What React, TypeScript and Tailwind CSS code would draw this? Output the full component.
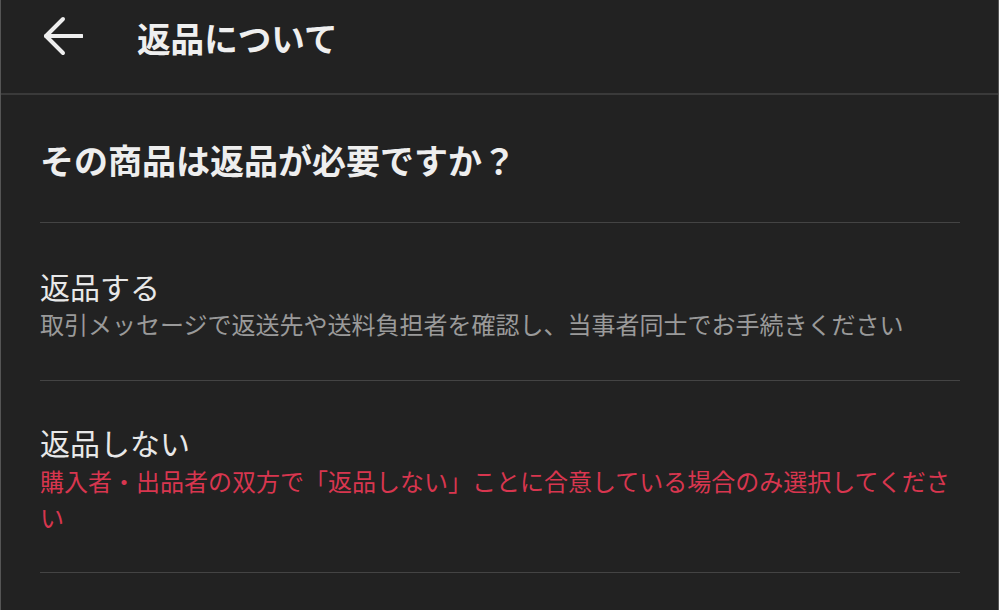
export default function App() {
  return (
    <div
      className="h-[610px] w-full overflow-hidden border-x border-[#555555] bg-[#222222] text-[#ececec]"
      style={{ fontFamily: '"Noto Sans CJK JP", "Noto Sans", sans-serif' }}
    >
      {/* Header */}
      <header className="flex h-[95px] items-start border-b-2 border-[#3a3a3a] pl-[42px] pt-[16px]">
        <svg
          width="40"
          height="40"
          viewBox="0 0 40 40"
          fill="none"
          stroke="#eeeeee"
          strokeWidth="4"
          strokeLinecap="round"
          strokeLinejoin="round"
        >
          <path d="M39 20H3" />
          <path d="M20 3L3 20L20 37" />
        </svg>
        <h1 className="ml-[54px] text-[33.6px] font-bold leading-[44px] text-[#efefef]">返品について</h1>
      </header>

      <div className="pl-[39px] pr-[38px]">
        {/* Question */}
        <div className="border-b border-[#444444] pb-[42px] pt-[45px]">
          <h2 className="text-[34px] font-bold leading-[40px] text-[#eeeeee]">その商品は返品が必要ですか？</h2>
        </div>

        {/* Option: return */}
        <div className="border-b border-[#444444] pb-[38px] pt-[44px]">
          <div className="text-[30px] leading-[38px] text-[#e8e8e8]">返品する</div>
          <div className="mt-[1px] text-[24px] leading-[36px] text-[#9a9a9a]">
            取引メッセージで返送先や送料負担者を確認し、当事者同士でお手続きください
          </div>
        </div>

        {/* Option: no return */}
        <div className="border-b border-[#444444] pb-[37px] pt-[42px]">
          <div className="text-[30px] leading-[38px] text-[#e8e8e8]">返品しない</div>
          <div className="mt-[2px] text-[24px] leading-[36px] text-[#d8364f]">
            購入者・出品者の双方で「返品しない」ことに合意している場合のみ選択してください
          </div>
        </div>
      </div>
    </div>
  );
}
